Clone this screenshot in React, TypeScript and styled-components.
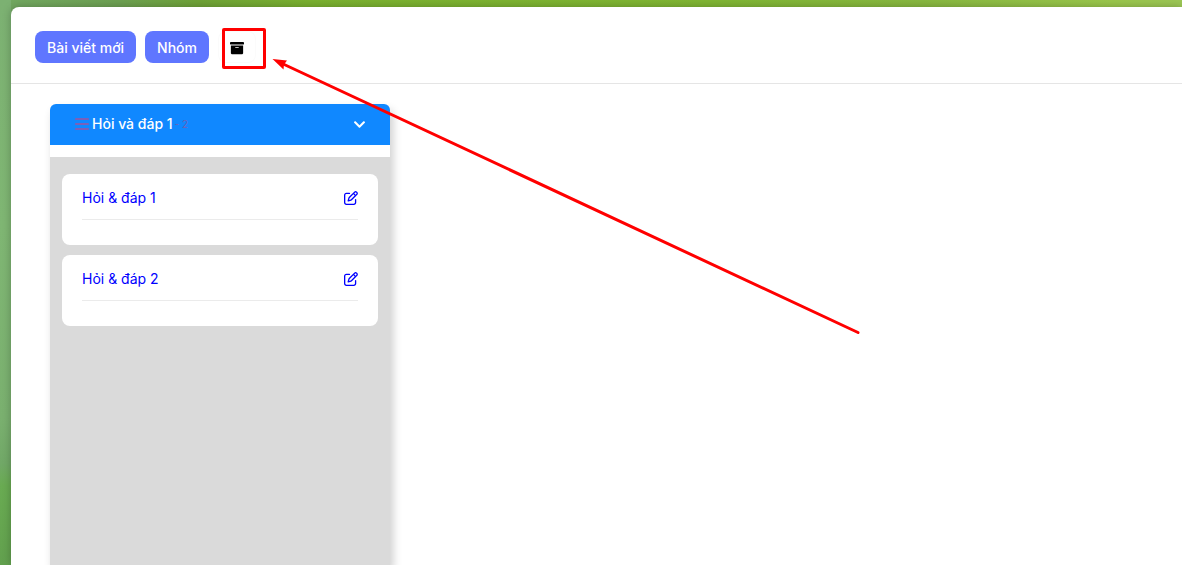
import React from "react";
import styled, { createGlobalStyle } from "styled-components";
import { FaArchive, FaChevronDown } from "react-icons/fa";
import { FaBars, FaRegPenToSquare } from "react-icons/fa6";

const GlobalStyle = createGlobalStyle`
  * {
    box-sizing: border-box;
  }

  body {
    margin: 0;
    overflow: hidden;
    font-family: Inter, "Liberation Sans", sans-serif;
    font-size: 14px;
    line-height: 20px;
  }
`;

const Backdrop = styled.div`
  display: flex;
  position: relative;
  min-height: 100vh;
  padding: 7px 0 0 11px;
  background:
    linear-gradient(
        180deg,
        #7cb172 0,
        #7fb673 40%,
        #7ab06f 74%,
        #71a867 82%,
        #69ab52 86%,
        #62a04e 100%
      )
      left / 11px 100% no-repeat,
    linear-gradient(
      90deg,
      #72a862 0,
      #6da152 10%,
      #6fa336 17%,
      #7ab12f 26%,
      #80b633 60%,
      #88b840 78%,
      #9ac74b 94%,
      #9cc755 100%
    );
`;

const Panel = styled.main`
  flex: 1;
  display: flex;
  flex-direction: column;
  min-width: 0;
  border-top-left-radius: 8px;
  background: #fff;
  box-shadow: 0 0 8px rgba(0, 0, 0, 0.25);
`;

const Toolbar = styled.header`
  display: flex;
  align-items: center;
  gap: 9px;
  padding: 24px 24px 20px;
  border-bottom: 1px solid #e5e5e5;
`;

const Button = styled.button<{ $plain?: boolean }>`
  display: flex;
  align-items: center;
  height: 32px;
  padding: 2px 12px 0;
  border: 0;
  border-radius: 8px;
  background: ${(p) => (p.$plain ? "#fff" : "#5f76ff")};
  box-shadow: ${(p) => (p.$plain ? "inset 0 0 0 1px #fbfbfb" : "none")};
  color: ${(p) => (p.$plain ? "#000" : "#fff")};
  font: inherit;
  font-weight: 500;
  white-space: nowrap;
  cursor: pointer;
`;

const Board = styled.div`
  flex: 1;
  display: flex;
  padding: 20px 39px 0;
`;

const Column = styled.section`
  display: flex;
  flex-direction: column;
  width: 340px;
  border-radius: 6px 6px 0 0;
  background: #fff;
  box-shadow: 3px 6px 10px rgba(0, 0, 0, 0.2);
`;

const ColumnHeader = styled.div`
  display: flex;
  align-items: center;
  height: 41px;
  padding: 0 24px 1px;
  border-radius: 6px 6px 0 0;
  background: #1088ff;
  color: #7a60b8;
`;

const ColumnTitle = styled.h2`
  margin: 0 2px;
  color: #fff;
  font-size: 14px;
  font-weight: 500;
`;

const Count = styled.span`
  flex: 1;
  color: #6a62b8;
  font-size: 10px;
`;

const IconButton = styled.button`
  display: flex;
  padding: 0;
  border: 0;
  background: none;
  color: #fff;
  cursor: pointer;
`;

const CardList = styled.div`
  flex: 1;
  display: flex;
  flex-direction: column;
  gap: 10px;
  margin-top: 12px;
  padding: 17px 12px;
  background: #dadada;
`;

const Card = styled.article`
  padding: 14px 20px 25px;
  border-radius: 8px;
  background: #fff;
`;

const CardLink = styled.a`
  display: flex;
  align-items: center;
  justify-content: space-between;
  padding-bottom: 11px;
  border-bottom: 1px solid #ebebeb;
  color: #00f;
  text-decoration: none;
`;

const Highlight = styled.div`
  position: absolute;
  top: 28px;
  left: 222px;
  width: 44px;
  height: 41px;
  border: 3px solid #f00;
  border-radius: 2px;
  pointer-events: none;
`;

const Arrow = styled.svg`
  position: absolute;
  top: 50px;
  left: 264px;
  pointer-events: none;
`;

const cards = ["Hỏi & đáp 1", "Hỏi & đáp 2"];

export default function App() {
  return (
    <>
      <GlobalStyle />
      <Backdrop>
        <Panel>
          <Toolbar>
            <Button type="button">Bài viết mới</Button>
            <Button type="button">Nhóm</Button>
            <Button type="button" $plain aria-label="Lưu trữ">
              <FaArchive size={14} />
            </Button>
          </Toolbar>
          <Board>
            <Column>
              <ColumnHeader>
                <FaBars size={16} />
                <ColumnTitle>Hỏi và đáp 1</ColumnTitle>
                <Count>- 2</Count>
                <IconButton type="button" aria-label="Thu gọn">
                  <FaChevronDown size={13} />
                </IconButton>
              </ColumnHeader>
              <CardList>
                {cards.map((title) => (
                  <Card key={title}>
                    <CardLink href="#">
                      {title}
                      <FaRegPenToSquare size={14} />
                    </CardLink>
                  </Card>
                ))}
              </CardList>
            </Column>
          </Board>
        </Panel>
        <Highlight />
        <Arrow width="600" height="290" viewBox="265 50 600 290" aria-hidden="true">
          <path d="M282 63L859 332.500" stroke="#f00" strokeWidth="3" strokeLinecap="round" />
          <path d="M273.500 59L288 60.500L285 64.500L284.500 69.500Z" fill="#f00" />
        </Arrow>
      </Backdrop>
    </>
  );
}
